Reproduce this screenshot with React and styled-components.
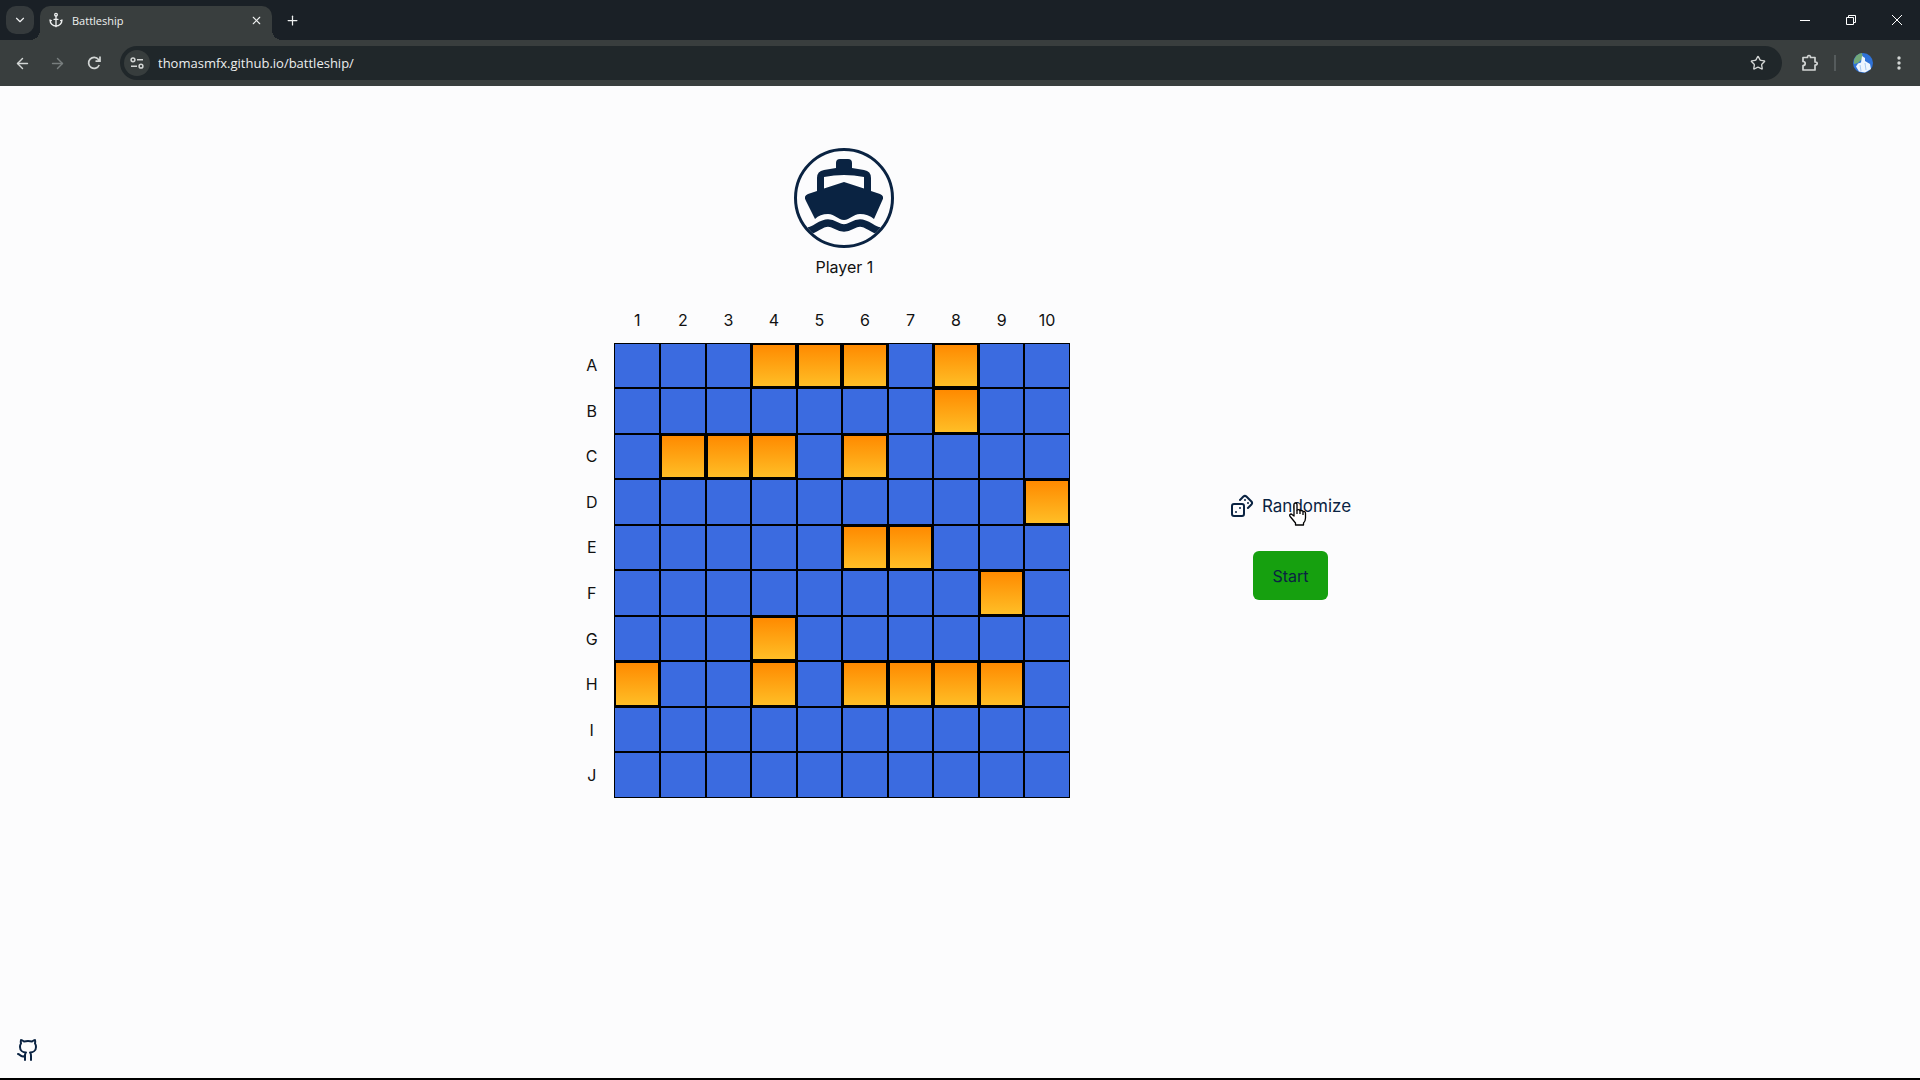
import React from "react";
import styled, { createGlobalStyle, css } from "styled-components";
import { Anchor, Dices, Github, ChevronDown, X, Plus, ArrowLeft, ArrowRight, Star } from "lucide-react";

const GlobalStyle = createGlobalStyle`
  * { box-sizing: border-box; }
  body { margin: 0; background: #fcfcfd; }
  button { font: inherit; color: inherit; border: 0; background: none; padding: 0; cursor: pointer; }
`;

const Screen = styled.div`
  min-height: 100vh;
  display: flex;
  flex-direction: column;
  border-bottom: 2px solid #000;
  font-family: Inter, "Liberation Sans", sans-serif;
`;

const TabStrip = styled.div`
  height: 40px;
  display: flex;
  align-items: flex-end;
  background: #1a2026;
  color: #eef0f0;
`;

const TabSearch = styled.button`
  width: 28px;
  height: 28px;
  margin: 0 6px 6px;
  display: grid;
  place-items: center;
  border-radius: 10px;
  background: #353a3c;
`;

const Tab = styled.div`
  position: relative;
  width: 232px;
  height: 34px;
  padding: 0 10px 6px 8px;
  display: flex;
  align-items: center;
  gap: 8px;
  border-radius: 10px 10px 0 0;
  background: #393e3e;
  font: 11px "Open Sans", "Noto Sans", sans-serif;

  &::before, &::after {
    content: "";
    position: absolute;
    bottom: 0;
    width: 10px;
    height: 10px;
  }
  &::before { left: -10px; background: radial-gradient(circle at 0 0, transparent 10px, #393e3e 10px); }
  &::after { right: -10px; background: radial-gradient(circle at 100% 0, transparent 10px, #393e3e 10px); }
`;

const TabTitle = styled.span`
  flex: 1;
`;

const PlainButton = styled.button`
  width: ${(p) => p.$width}px;
  height: ${(p) => p.$height}px;
  display: grid;
  place-items: center;
`;

const TabClose = styled(PlainButton)`
  margin-right: -4px;
`;

const NewTab = styled(PlainButton)`
  margin: 0 auto 6px 6px;
`;

const Toolbar = styled.div`
  height: 46px;
  padding: 0 4px 0 8px;
  display: flex;
  align-items: center;
  background: #393e3e;
  color: #d3d6d5;
`;

const AddressBar = styled.label`
  flex: 1;
  height: 34px;
  margin: 0 12px 0 11px;
  padding: 0 16px 0 4px;
  display: flex;
  align-items: center;
  gap: 8px;
  border-radius: 17px;
  background: #20272a;
`;

const SiteInfo = styled.span`
  width: 26px;
  height: 26px;
  display: grid;
  place-items: center;
  border-radius: 50%;
  background: #373d3d;
`;

const AddressInput = styled.input`
  flex: 1;
  min-width: 0;
  border: 0;
  padding: 0;
  outline: 0;
  background: none;
  color: #eceeee;
  font: 13px "Open Sans", "Noto Sans", sans-serif;
`;

const Divider = styled.span`
  width: 2px;
  height: 16px;
  margin: 0 8px;
  background: #555b5c;
`;

const Main = styled.main`
  flex: 1;
  padding-top: 62px;
  display: flex;
  justify-content: center;
  align-items: flex-start;
  gap: 160px;
  color: #111;
  font-size: 16px;
`;

const BoardColumn = styled.section`
  display: flex;
  flex-direction: column;
  gap: 18px;
`;

const Player = styled.div`
  padding-left: 50px;
  display: flex;
  flex-direction: column;
  align-items: center;
  gap: 7px;
  line-height: 24px;
`;

const Badge = styled.div`
  width: 100px;
  height: 100px;
  border: 3px solid #0a2342;
  border-radius: 50%;
  overflow: hidden;
`;

const Board = styled.div`
  width: 501px;
  height: 501px;
  display: grid;
  grid-template: repeat(11, 1fr) / repeat(11, 1fr);
`;

const Label = styled.span`
  display: grid;
  place-items: center;
`;

const Cell = styled.div`
  border: 1px solid #000;
  background: #3b6be0;
  ${(p) => p.$ship && css`
    border-width: 2px;
    background: linear-gradient(#ff8a00, #ffbe26);
  `}
`;

const Controls = styled.section`
  padding-top: 346px;
  display: flex;
  flex-direction: column;
  align-items: center;
  gap: 33px;
  color: #0a2342;
`;

const Randomize = styled.button`
  && {
    position: relative;
    display: flex;
    align-items: center;
    gap: 8px;
    font-size: 17px;
    line-height: 24px;
  }
`;

const Pointer = styled.svg`
  position: absolute;
  left: 58px;
  top: 8px;
`;

const Start = styled.button`
  && {
    padding: 0 19px;
    height: 49px;
    border-radius: 6px;
    background: #16a00f;
  }
`;

const Footer = styled.footer`
  padding: 0 16px 12px;
  color: #0a2342;
  a { display: inline-block; color: inherit; line-height: 0; }
`;

const ROWS = "ABCDEFGHIJ".split("");
const SHIPS = new Set("A4 A5 A6 A8 B8 C2 C3 C4 C6 D10 E6 E7 F9 G4 H1 H4 H6 H7 H8 H9".split(" "));

function Boat() {
  return (
    <svg width="94" height="94" viewBox="3 3 94 94" fill="#0a2342" aria-hidden="true">
      <path fillRule="evenodd" d="M42 20V15q0-4 4-4h8q4 0 4 4v5l12 2q7 1 7 8v13l9 3q5 2 2 7L80 71q-6-5-14-5c-7 0-10 6-16 6s-9-6-16-6q-8 0-13 5L12 53q-3-5 2-7l9-3V30q0-7 7-8zM30 29v11.500l20-6.500 20 6.500V29q-20-4-40 0z" />
      <path d="M14 83c8-1 12-8 20-8 7 0 9 5 16 5s9-5 16-5c8 0 12 7 20 8" fill="none" stroke="#0a2342" strokeWidth="7.500" />
    </svg>
  );
}

function HandPointer() {
  return (
    <Pointer width="20" height="24" viewBox="0 0 20 24" fill="#fff" stroke="#000" strokeWidth="1.3" strokeLinejoin="round" aria-hidden="true">
      <path d="M6 14V2.500q0-1.500 1.500-1.500T9 2.500V8q2-1 3 .700 2-.7 3 .8 2.500-.5 2.500 2V16q0 3-2 5v2H7.500v-2L3 15.500q-2-2-1-3t2 0z" />
      <path d="M9 8v4M12 9v3M15 10v3" fill="none" />
    </Pointer>
  );
}

export default function App() {
  return (
    <Screen>
      <GlobalStyle />
      <header>
        <TabStrip>
          <TabSearch aria-label="Search tabs"><ChevronDown size={14} /></TabSearch>
          <Tab>
            <Anchor size={16} />
            <TabTitle>Battleship</TabTitle>
            <TabClose $width={20} $height={20} aria-label="Close tab"><X size={13} /></TabClose>
          </Tab>
          <NewTab $width={28} $height={28} aria-label="New tab"><Plus size={15} /></NewTab>
          <PlainButton $width={46} $height={40} aria-label="Minimize">
            <svg width="10" height="10" stroke="#fff"><path d="M0 5.500h10" /></svg>
          </PlainButton>
          <PlainButton $width={46} $height={40} aria-label="Restore">
            <svg width="10" height="10" stroke="#fff" fill="none"><path d="M.5 2.500h7v7h-7zM2.500 2.500v-2h7v7h-2" /></svg>
          </PlainButton>
          <PlainButton $width={46} $height={40} aria-label="Close window">
            <svg width="10" height="10" stroke="#fff"><path d="M0 0l10 10M10 0L0 10" /></svg>
          </PlainButton>
        </TabStrip>
        <Toolbar>
          <PlainButton $width={28} $height={34} aria-label="Back"><ArrowLeft size={17} /></PlainButton>
          <PlainButton $width={43} $height={34} aria-label="Forward"><ArrowRight size={17} color="#787e7e" /></PlainButton>
          <PlainButton $width={30} $height={34} aria-label="Reload">
            <svg width="14" height="14" viewBox="0 0 14 14" fill="none" stroke="currentColor" strokeWidth="1.700">
              <path d="M12.200 9A5.500 5.500 0 1 1 11.500 3.500L13 5M13 .5V5.200H8.500" />
            </svg>
          </PlainButton>
          <AddressBar>
            <SiteInfo>
              <svg width="14" height="12" viewBox="0 0 14 12" fill="none" stroke="currentColor" strokeWidth="1.500">
                <circle cx="3" cy="2.800" r="1.900" /><path d="M7 2.800h6M1 9.200h6" /><circle cx="11" cy="9.200" r="1.900" />
              </svg>
            </SiteInfo>
            <AddressInput aria-label="Address" defaultValue="thomasmfx.github.io/battleship/" />
            <Star size={16} />
          </AddressBar>
          <PlainButton $width={32} $height={34} aria-label="Extensions">
            <svg width="18" height="18" viewBox="0 0 18 18" fill="none" stroke="currentColor" strokeWidth="1.700" strokeLinejoin="round">
              <path d="M2 3.500h4.500q0-2 1.500-2t1.500 2H14V8q2.200 0 2.200 1.500T14 11v5H2v-4.500q2.200 0 2.200-2T2 7.500z" />
            </svg>
          </PlainButton>
          <Divider />
          <PlainButton $width={38} $height={34} aria-label="Profile">
            <svg width="20" height="20" viewBox="0 0 20 20">
              <circle cx="10" cy="10" r="10" fill="#2f72d8" />
              <path d="M1 7Q3 1 9 0l1 5-5 5-4 1z" fill="#73a878" />
              <path d="M9 3l3 2v3l5 3 1 5-6 3.500-6-1-3-5 2-3 3-1z" fill="#eef5ff" />
              <path d="M7 12l1 6M12 10l1 7" stroke="#a9c9f2" />
            </svg>
          </PlainButton>
          <PlainButton $width={34} $height={34} aria-label="Menu">
            <svg width="4" height="14" fill="currentColor"><circle cx="2" cy="2" r="1.700" /><circle cx="2" cy="7" r="1.700" /><circle cx="2" cy="12" r="1.700" /></svg>
          </PlainButton>
        </Toolbar>
      </header>
      <Main>
        <BoardColumn>
          <Player>
            <Badge><Boat /></Badge>
            <span>Player 1</span>
          </Player>
          <Board>
            <span />
            {ROWS.map((r, i) => <Label key={r}>{i + 1}</Label>)}
            {ROWS.map((r) => (
              <React.Fragment key={r}>
                <Label>{r}</Label>
                {ROWS.map((c, i) => <Cell key={c} $ship={SHIPS.has(r + (i + 1))} />)}
              </React.Fragment>
            ))}
          </Board>
        </BoardColumn>
        <Controls>
          <Randomize>
            <Dices size={24} />
            Randomize
            <HandPointer />
          </Randomize>
          <Start>Start</Start>
        </Controls>
      </Main>
      <Footer>
        <a href="https://github.com/thomasmfx" aria-label="GitHub"><Github size={24} /></a>
      </Footer>
    </Screen>
  );
}
